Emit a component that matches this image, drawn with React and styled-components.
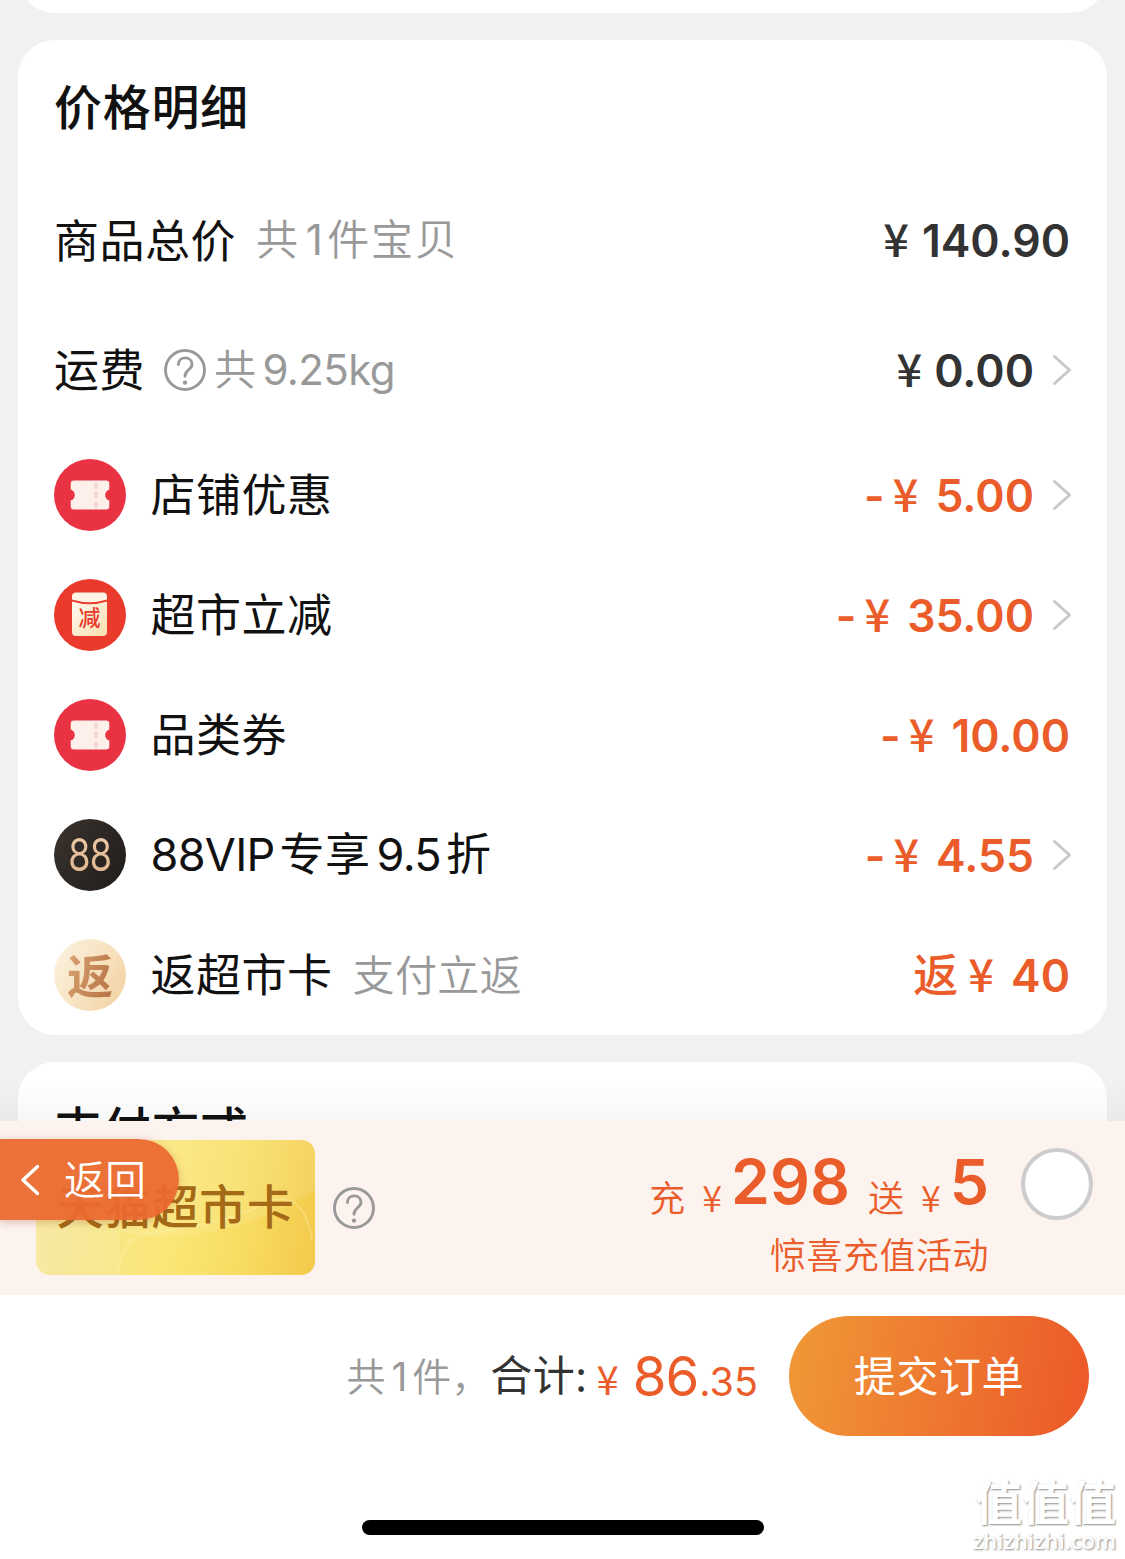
import styled, { createGlobalStyle } from "styled-components";

const items = [
    { id: 1, icon: "coupon", name: "店铺优惠", value: "5.00", link: true },
    { id: 2, icon: "pouch", name: "超市立减", value: "35.00", link: true },
    { id: 3, icon: "coupon", name: "品类券", value: "10.00" },
    { id: 4, icon: "vip", name: "88VIP专享9.5折", value: "4.55", link: true },
    { id: 5, icon: "cashback", name: "返超市卡", hint: "支付立返", prefix: "返", value: "40" }
];

function Chevron() {
    return (
        <ChevronIcon viewBox="0 0 20 32">
            <path d="M2.5 2.5 L17.5 16 L2.5 29.5" />
        </ChevronIcon>
    )
}

function Help() {
    return (
        <HelpIcon viewBox="0 0 42 42">
            <circle cx="21" cy="21" r="19.5" />
            <path d="M14.4 15.6 C14.4 6.6 28 6.8 28 15.4 C28 20.4 21 20.8 21 27.2" />
            <circle className="dot" cx="21" cy="33.6" r="2.2" />
        </HelpIcon>
    )
}

function CouponIcon() {
    return (
        <svg width="72" height="72" viewBox="0 0 72 72">
            <path
                fill="#fdf0ea"
                d="M20 21.5 H52 Q55.3 21.5 55.3 24.8 V30.4 Q51.2 32 51.2 36 Q51.2 40 55.3 41.6 V47.2 Q55.3 50.5 52 50.5 H20 Q16.7 50.5 16.7 47.2 V41.6 Q20.8 40 20.8 36 Q20.8 32 16.7 30.4 V24.8 Q16.7 21.5 20 21.5 Z"
            />
            <path stroke="#f4d6cc" strokeWidth="3.6" d="M42 24 v5.5 M42 33 v6 M42 43 v5.5" />
        </svg>
    )
}

function PouchIcon() {
    return (
        <svg width="72" height="72" viewBox="0 0 72 72">
            <defs>
                <linearGradient id="pouch" x1="0" y1="0" x2="1" y2="1">
                    <stop offset="0" stopColor="#fffaf2" />
                    <stop offset="1" stopColor="#f8dfae" />
                </linearGradient>
            </defs>
            <path fill="#fff3e6" d="M22 13.5 H49 Q53 13.5 53 17.5 V20.5 Q35.5 26 18 20.5 V17.5 Q18 13.5 22 13.5 Z" />
            <path fill="url(#pouch)" d="M18 22.5 Q35.5 28 53 22.5 V53 Q53 57 49 57 H22 Q18 57 18 53 Z" />
            <text x="35.5" y="47" textAnchor="middle" fontSize="22" fontWeight="500" fill="#e8382a">减</text>
        </svg>
    )
}

function ItemIcon({ type }) {
    return (
        <IconCircle $type={type}>
            {type === "coupon" && <CouponIcon />}
            {type === "pouch" && <PouchIcon />}
            {type === "vip" && <VipMark>88</VipMark>}
            {type === "cashback" && <CashbackMark>返</CashbackMark>}
        </IconCircle>
    )
}

function ItemName({ name }) {
    return name.split(/([0-9A-Z.]+)/).filter(Boolean).map((part, i) => (
        /[0-9]/.test(part) ? <NameLatin key={i}>{part}</NameLatin> : <span key={i}>{part}</span>
    ))
}

function Item({ item }) {
    return (
        <ItemRow>
            <ItemIcon type={item.icon} />
            <Name><ItemName name={item.name} /></Name>
            {item.hint && <Hint $left={20}>{item.hint}</Hint>}
            <Amount $accent $end={!item.link}>
                {item.prefix ? <span>{item.prefix}</span> : <b>-</b>}
                <Yen $left={item.prefix ? 10 : 8} $right={17}>¥</Yen>
                <b>{item.value}</b>
            </Amount>
            {item.link && <Chevron />}
        </ItemRow>
    )
}

function PriceCard() {
    return (
        <Card>
            <Title>价格明细</Title>
            <InfoRow>
                <Name>商品总价</Name>
                <Hint $left={20} $spacing={1.8}>共<HintNumber>1</HintNumber>件宝贝</Hint>
                <Amount $end>
                    <Yen $right={13}>¥</Yen>
                    <b>140.90</b>
                </Amount>
            </InfoRow>
            <InfoRow>
                <Name>运费</Name>
                <HelpSlot $left={19}><Help /></HelpSlot>
                <Hint $left={8}>共<HintNumber>9.25kg</HintNumber></Hint>
                <Amount>
                    <Yen $right={12}>¥</Yen>
                    <b>0.00</b>
                </Amount>
                <Chevron />
            </InfoRow>
            {items.map(item => <Item key={item.id} item={item} />)}
        </Card>
    )
}

function Promo() {
    return (
        <PromoBar>
            <MarketCard>
                <svg width="279" height="135" viewBox="0 0 279 135">
                    <path fill="#ffffff" opacity="0.1" d="M0 0 H279 V50 Q180 110 83 92 Q84 120 83 135 H0 Z" />
                    <path fill="none" stroke="#fff6b8" opacity="0.3" strokeWidth="2" d="M83 135 Q82 96 120 92 Q200 82 230 62 Q268 48 276 100" />
                </svg>
                <span>天猫超市卡</span>
            </MarketCard>
            <HelpSlot $left={18}><Help /></HelpSlot>
            <PromoInfo>
                <PromoPrice>
                    <PromoText>充</PromoText>
                    <PromoYen>¥</PromoYen>
                    <PromoNumber>298</PromoNumber>
                    <PromoText $left={18}>送</PromoText>
                    <PromoYen>¥</PromoYen>
                    <PromoNumber>5</PromoNumber>
                </PromoPrice>
                <PromoCaption>惊喜充值活动</PromoCaption>
            </PromoInfo>
            <Radio />
        </PromoBar>
    )
}

export default function App() {
    return (
        <Page>
            <GlobalStyle />
            <Content>
                <PreviousCard />
                <PriceCard />
                <Card>
                    <Title>支付方式</Title>
                </Card>
                <ContentShade />
            </Content>
            <Promo />
            <SubmitBar>
                <Total>
                    <Count>共<i>1</i>件，</Count>
                    <TotalLabel>合计:</TotalLabel>
                    <TotalYen>¥</TotalYen>
                    <TotalInteger>86</TotalInteger>
                    <TotalDecimal>.35</TotalDecimal>
                </Total>
                <SubmitButton>提交订单</SubmitButton>
            </SubmitBar>
            <HomeArea>
                <HomeIndicator />
            </HomeArea>
            <BackButton>
                <svg width="20" height="32" viewBox="0 0 20 32">
                    <path d="M17.5 2.5 L3 16 L17.5 29.5" />
                </svg>
                <span>返回</span>
            </BackButton>
            <Watermark>
                <strong>值值值</strong>
                <span>zhizhizhi.com</span>
            </Watermark>
        </Page>
    )
}

const GlobalStyle = createGlobalStyle`
    * {
        box-sizing: border-box;
    }
    body {
        margin: 0;
        background: #FFFFFF;
        font-family: 'Noto Sans CJK SC', sans-serif;
    }
    svg {
        display: block;
        flex-shrink: 0;
    }
`

const Page = styled.div`
    position: relative;
    width: 1125px;
    height: 1559px;
    overflow: hidden;
    display: flex;
    flex-direction: column;
    background: #FFFFFF;
    white-space: nowrap;
`

const Content = styled.div`
    position: relative;
    height: 1121px;
    flex-shrink: 0;
    overflow: hidden;
    padding: 0 18px;
    display: flex;
    flex-direction: column;
    background: #F1F1F1;
`

const ContentShade = styled.div`
    position: absolute;
    left: 0;
    right: 0;
    bottom: 0;
    height: 40px;
    background: linear-gradient(rgba(0, 0, 0, 0), rgba(0, 0, 0, 0.03));
`

const PreviousCard = styled.div`
    height: 13px;
    flex-shrink: 0;
    overflow: hidden;
    display: flex;
    align-items: flex-end;
    &::after {
        content: '';
        flex: 1;
        height: 80px;
        border-radius: 37px;
        background: #FFFFFF;
    }
`

const Card = styled.section`
    flex-shrink: 0;
    margin-top: 27px;
    padding: 0 36px;
    background: #FFFFFF;
    border-radius: 37px;
    overflow: hidden;
`

const Title = styled.h2`
    margin: 0;
    height: 136px;
    line-height: 129px;
    font-size: 48px;
    font-weight: 500;
    letter-spacing: 0.7px;
    color: #111111;
`

const InfoRow = styled.div`
    display: flex;
    align-items: center;
    height: 129.5px;
`

const ItemRow = styled.div`
    display: flex;
    align-items: center;
    height: 120px;
`

const Name = styled.span`
    display: flex;
    align-items: baseline;
    padding-bottom: 4px;
    font-size: 45px;
    line-height: 60px;
    letter-spacing: 0.5px;
    color: #111111;
`

const NameLatin = styled.span`
    font-family: Inter, sans-serif;
    font-size: 45px;
    letter-spacing: -0.7px;
    margin-right: 5px;
    &:not(:first-child) {
        margin-left: 6px;
    }
`

const Hint = styled.span`
    display: flex;
    align-items: baseline;
    padding-bottom: 4px;
    margin-left: ${props => props.$left}px;
    font-size: 42px;
    line-height: 60px;
    letter-spacing: ${props => props.$spacing || 0.4}px;
    font-weight: 350;
    color: #999999;
`

const HintNumber = styled.span`
    font-family: Inter, sans-serif;
    font-weight: 400;
    letter-spacing: -0.6px;
    margin: 0 5px 0 6px;
`

const Amount = styled.span`
    display: flex;
    align-items: baseline;
    padding-bottom: 2px;
    margin-left: auto;
    margin-right: ${props => props.$end ? 1 : 0}px;
    font-size: 45px;
    line-height: 60px;
    font-weight: 500;
    color: ${props => props.$accent ? "#EB5C2B" : "#333333"};
    b {
        font-family: Inter, sans-serif;
        font-size: 44.5px;
        font-weight: 600;
    }
`

const Yen = styled.span`
    margin-left: ${props => props.$left || 0}px;
    margin-right: ${props => props.$right}px;
`

const HelpSlot = styled.span`
    margin-left: ${props => props.$left}px;
`

const HelpIcon = styled.svg`
    width: 42px;
    height: 42px;
    fill: none;
    stroke: #999999;
    stroke-width: 2.9;
    stroke-linecap: round;
    .dot {
        fill: #999999;
        stroke: none;
    }
`

const ChevronIcon = styled.svg`
    width: 20px;
    height: 32px;
    margin-left: 18px;
    margin-right: -1px;
    fill: none;
    stroke: #C8C8C8;
    stroke-width: 3;
    stroke-linecap: round;
    stroke-linejoin: round;
`

const circleColors = {
    coupon: "#E93343",
    pouch: "#EA3A2B",
    vip: "linear-gradient(120deg, #3A332E, #211D1B)",
    cashback: "linear-gradient(120deg, #FBF0DC 10%, #F6E0BC 60%, #F3CF9C)"
}

const IconCircle = styled.div`
    width: 72px;
    height: 72px;
    margin-right: 24.5px;
    border-radius: 50%;
    display: flex;
    align-items: center;
    justify-content: center;
    flex-shrink: 0;
    background: ${props => circleColors[props.$type]};
`

const VipMark = styled.span`
    font-family: Inter, sans-serif;
    font-size: 45px;
    line-height: 72px;
    font-weight: 400;
    letter-spacing: -1px;
    transform: scaleX(0.8);
    background: linear-gradient(#F2D2AE, #D9AE86);
    background-clip: text;
    color: transparent;
`

const CashbackMark = styled.span`
    font-size: 46px;
    line-height: 72px;
    padding-bottom: 4px;
    font-weight: 700;
    background: linear-gradient(110deg, #DDA877, #B36C3E);
    background-clip: text;
    color: transparent;
`

const PromoBar = styled.div`
    display: flex;
    align-items: center;
    height: 174px;
    flex-shrink: 0;
    padding: 0 32px 0 36px;
    background: #FCF2EE;
`

const MarketCard = styled.div`
    display: grid;
    place-items: center;
    width: 279px;
    height: 135px;
    margin-bottom: 1px;
    border-radius: 14px;
    overflow: hidden;
    background: linear-gradient(100deg, #F6E79A 5%, #FBE676 50%, #F8DC62 75%, #F3C94A);
    svg, span {
        grid-area: 1 / 1;
    }
    span {
        padding-bottom: 9px;
        font-size: 47px;
        font-weight: 500;
        letter-spacing: 0.6px;
        color: #A56A17;
    }
`

const PromoInfo = styled.div`
    display: flex;
    flex-direction: column;
    align-items: flex-end;
    margin-left: auto;
    height: 174px;
    padding-top: 24px;
    color: #EB5C2B;
`

const PromoPrice = styled.div`
    display: flex;
    align-items: flex-end;
    height: 79px;
`

const PromoText = styled.span`
    margin-left: ${props => props.$left || 0}px;
    padding-bottom: 1px;
    font-size: 36px;
    line-height: 54px;
    font-weight: 350;
`

const PromoYen = styled.span`
    padding-bottom: 1px;
    font-size: 36px;
    line-height: 54px;
    font-weight: 350;
    margin: 0 9px 0 17px;
`

const PromoNumber = styled.span`
    font-family: Inter, sans-serif;
    font-size: 62.5px;
    line-height: 64px;
    font-weight: 600;
    padding-bottom: 11px;
`

const PromoCaption = styled.span`
    font-size: 36px;
    line-height: 59px;
    letter-spacing: 0.5px;
    font-weight: 350;
`

const Radio = styled.div`
    width: 72px;
    height: 72px;
    margin-left: 32px;
    margin-bottom: 48px;
    border-radius: 50%;
    border: 4px solid #CCCCCC;
    background: #FFFFFF;
`

const SubmitBar = styled.div`
    display: flex;
    align-items: flex-start;
    justify-content: flex-end;
    height: 162px;
    padding: 21px 36px 0 0;
    flex-shrink: 0;
`

const Total = styled.div`
    line-height: 120px;
    font-size: 0;
`

const Count = styled.span`
    font-size: 39px;
    font-weight: 350;
    line-height: 1;
    vertical-align: 5px;
    color: #999999;
    i {
        font-family: Inter, sans-serif;
        font-style: normal;
        font-weight: 400;
        margin: 0 5px 0 6px;
    }
`

const TotalLabel = styled.span`
    font-size: 42px;
    line-height: 1;
    letter-spacing: 0.5px;
    vertical-align: 5px;
    color: #333333;
`

const TotalYen = styled.span`
    font-size: 40px;
    line-height: 1;
    margin: 0 14px 0 9px;
    vertical-align: 1px;
    color: #EB5C2B;
`

const TotalInteger = styled.span`
    font-family: Inter, sans-serif;
    font-size: 54.5px;
    line-height: 120px;
    letter-spacing: -1px;
    color: #EB5C2B;
`

const TotalDecimal = styled.span`
    font-family: Inter, sans-serif;
    font-size: 39.5px;
    line-height: 1;
    margin-left: 1px;
    color: #EB5C2B;
`

const SubmitButton = styled.button`
    width: 300px;
    height: 120px;
    margin-left: 31px;
    padding: 0 0 4px;
    border: none;
    border-radius: 60px;
    background: linear-gradient(100deg, #F09937, #EC5B29 95%);
    font-family: inherit;
    font-size: 42px;
    line-height: 116px;
    letter-spacing: 0.6px;
    color: #FFFFFF;
`

const HomeArea = styled.div`
    display: flex;
    justify-content: center;
    align-items: flex-end;
    height: 102px;
    padding-bottom: 24px;
    padding-left: 1px;
`

const HomeIndicator = styled.div`
    width: 402px;
    height: 15px;
    border-radius: 8px;
    background: #000000;
`

const BackButton = styled.div`
    position: absolute;
    left: 0;
    top: 1139px;
    width: 179px;
    height: 81px;
    display: flex;
    align-items: center;
    padding-left: 20px;
    border-radius: 0 41px 41px 0;
    background: rgba(235, 105, 48, 0.94);
    box-shadow: 0 2px 8px rgba(150, 60, 20, 0.3);
    color: #FFFFFF;
    font-size: 41px;
    font-weight: 350;
    span {
        padding-bottom: 5px;
    }
    svg {
        fill: none;
        stroke: #FFFFFF;
        stroke-width: 3.4;
        stroke-linecap: round;
        stroke-linejoin: round;
        margin-right: 24px;
    }
`

const Watermark = styled.div`
    position: absolute;
    right: 9px;
    top: 1473px;
    display: flex;
    flex-direction: column;
    align-items: flex-end;
    color: #FFFFFF;
    text-shadow: 1px 1px 2px rgba(0, 0, 0, 0.45);
    strong {
        font-size: 47px;
        line-height: 54px;
        font-weight: 700;
    }
    span {
        font-family: 'Open Sans', sans-serif;
        font-size: 22px;
        line-height: 26px;
        font-weight: 600;
    }
`
